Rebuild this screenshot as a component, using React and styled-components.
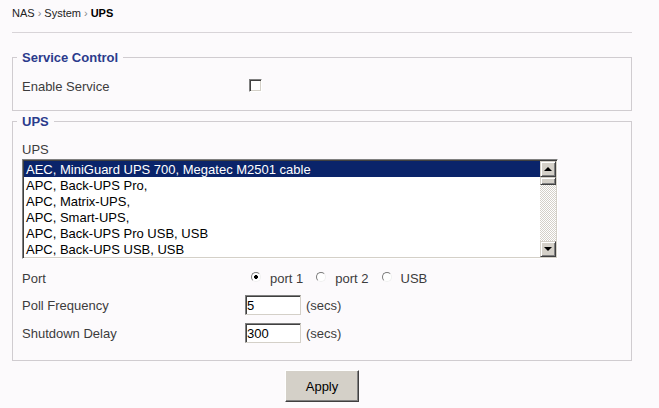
import React, { useState } from 'react';
import styled, { createGlobalStyle } from 'styled-components';

const GlobalStyle = createGlobalStyle`
  body {
    margin: 0;
    background: #fcfafc;
    font-family: "Liberation Sans", Arial, sans-serif;
    color: #3c3c3c;
  }
`;

const upsModels = [
  'AEC, MiniGuard UPS 700, Megatec M2501 cable',
  'APC, Back-UPS Pro,',
  'APC, Matrix-UPS,',
  'APC, Smart-UPS,',
  'APC, Back-UPS Pro USB, USB',
  'APC, Back-UPS USB, USB',
];

const Page = styled.div`
  width: 620px;
  margin-left: 12px;
`;

const Breadcrumb = styled.div`
  height: 26px;
  padding-top: 6px;
  line-height: 15px;
  font-size: 11px;
  color: #222;
  border-bottom: 1px solid #d8d4d8;
  b {
    color: #000;
  }
  span {
    color: #888;
    margin: 0 3px;
  }
`;

const Fieldset = styled.fieldset`
  margin: ${p => p.$top}px 0 0;
  padding: ${p => p.$pt}px 9px ${p => p.$pb}px;
  border: 1px solid #d0ccd0;
  min-width: 0;
`;

const Legend = styled.legend`
  margin-left: -5px;
  padding: 0 5px;
  font-size: 13px;
  font-weight: bold;
  line-height: 17px;
  color: #2b3a8c;
`;

const Row = styled.div`
  display: flex;
  align-items: center;
  height: ${p => p.$h || 28}px;
  margin-top: ${p => p.$mt || 0}px;
`;

const Label = styled.div`
  width: 223px;
  flex-shrink: 0;
  font-size: 13px;
  line-height: 16px;
  padding-top: 1px;
`;

const FieldTitle = styled.div`
  font-size: 13px;
  line-height: 16px;
  padding-top: 1px;
  height: 15px;
`;

const Checkbox = styled.input.attrs({ type: 'checkbox' })`
  appearance: none;
  width: 13px;
  height: 13px;
  margin: -1px 0 0 4px;
  background: #fff;
  border: 1px solid;
  border-color: #808080 #fff #fff #808080;
  box-shadow: inset 1px 1px #404040, inset -1px -1px #d4d0c8;
`;

const Radio = styled.input.attrs({ type: 'radio' })`
  appearance: none;
  width: 10px;
  height: 10px;
  margin: 0 9px 3px ${p => (p.$first ? 6 : 0)}px;
  border-radius: 50%;
  border: 1px solid;
  border-color: #7a7a7a #f0f0f0 #f0f0f0 #7a7a7a;
  background: #fff;
  &:checked {
    background: radial-gradient(circle, #000 0 1.6px, #fff 2.2px);
  }
`;

const RadioText = styled.span`
  font-size: 13px;
  margin-right: 13px;
  padding-top: 1px;
`;

const TextInput = styled.input`
  box-sizing: border-box;
  width: 56px;
  height: 20px;
  padding: 0 1px;
  font: 13px "Liberation Sans", Arial, sans-serif;
  color: #000;
  background: #fff;
  border: 1px solid;
  border-color: #808080 #d4d0c8 #d4d0c8 #808080;
  box-shadow: inset 1px 1px #404040;
  outline: none;
`;

const Unit = styled.span`
  margin-left: 5px;
  font-size: 13px;
  padding-top: 1px;
`;

const ListBox = styled.div`
  display: flex;
  box-sizing: border-box;
  width: 536px;
  height: 100px;
  margin-top: 2px;
  padding: 1px;
  background: #fff;
  border: 1px solid;
  border-color: #808080 #fff #fff #808080;
  box-shadow: inset 1px 1px #404040, inset -1px -1px #d4d0c8;
`;

const Options = styled.div`
  flex: 1;
  overflow: hidden;
`;

const Option = styled.div`
  box-sizing: border-box;
  height: 16px;
  padding: 1px 0 0 2px;
  font-size: 13px;
  line-height: 16px;
  white-space: nowrap;
  overflow: hidden;
  color: ${p => (p.$selected ? '#fff' : '#000')};
  background: ${p => (p.$selected ? '#0a246a' : 'transparent')};
  cursor: default;
`;

const Scrollbar = styled.div`
  display: flex;
  flex-direction: column;
  width: 16px;
`;

const ScrollButton = styled.div`
  box-sizing: border-box;
  display: flex;
  align-items: center;
  justify-content: center;
  width: 16px;
  height: ${p => p.$h || 16}px;
  background: #d4d0c8;
  border: 1px solid;
  border-color: #d4d0c8 #404040 #404040 #d4d0c8;
  box-shadow: inset 1px 1px #fff, inset -1px -1px #808080;
`;

const Arrow = styled.span`
  width: 0;
  height: 0;
  border-left: 4px solid transparent;
  border-right: 4px solid transparent;
  ${p => (p.$down ? 'border-top: 4px solid #000;' : 'border-bottom: 4px solid #000;')}
`;

const Track = styled.div`
  flex: 1;
  background: repeating-conic-gradient(#d4d0c8 0 25%, #fff 0 50%) 0 0 / 2px 2px;
`;

const ApplyButton = styled.button`
  display: block;
  width: 74px;
  height: 32px;
  margin: 9px auto 0;
  padding-top: 2px;
  font: 13px "Liberation Sans", Arial, sans-serif;
  color: #000;
  background: #d4d0c8;
  border: 1px solid;
  border-color: #fff #404040 #404040 #fff;
  box-shadow: inset -1px -1px #808080;
`;

const App = () => {
  const [enabled, setEnabled] = useState(false);
  const [selected, setSelected] = useState(0);
  const [port, setPort] = useState('port1');
  const [poll, setPoll] = useState('5');
  const [delay, setDelay] = useState('300');

  return (
    <Page>
      <GlobalStyle />
      <Breadcrumb>
        NAS<span>›</span>System<span>›</span><b>UPS</b>
      </Breadcrumb>

      <Fieldset $top={16} $pt={6} $pb={10}>
        <Legend>Service Control</Legend>
        <Row>
          <Label>Enable Service</Label>
          <Checkbox checked={enabled} onChange={e => setEnabled(e.target.checked)} />
        </Row>
      </Fieldset>

      <Fieldset $top={2} $pt={11} $pb={13}>
        <Legend>UPS</Legend>
        <FieldTitle>UPS</FieldTitle>
        <ListBox>
          <Options>
            {upsModels.map((model, i) => (
              <Option key={model} $selected={i === selected} onClick={() => setSelected(i)}>
                {model}
              </Option>
            ))}
          </Options>
          <Scrollbar>
            <ScrollButton>
              <Arrow />
            </ScrollButton>
            <ScrollButton $h={8} />
            <Track />
            <ScrollButton>
              <Arrow $down />
            </ScrollButton>
          </Scrollbar>
        </ListBox>

        <Row $h={26} $mt={6}>
          <Label>Port</Label>
          <Radio $first name="port" checked={port === 'port1'} onChange={() => setPort('port1')} />
          <RadioText>port 1</RadioText>
          <Radio name="port" checked={port === 'port2'} onChange={() => setPort('port2')} />
          <RadioText>port 2</RadioText>
          <Radio name="port" checked={port === 'usb'} onChange={() => setPort('usb')} />
          <RadioText>USB</RadioText>
        </Row>
        <Row>
          <Label>Poll Frequency</Label>
          <TextInput value={poll} onChange={e => setPoll(e.target.value)} />
          <Unit>(secs)</Unit>
        </Row>
        <Row>
          <Label>Shutdown Delay</Label>
          <TextInput value={delay} onChange={e => setDelay(e.target.value)} />
          <Unit>(secs)</Unit>
        </Row>
      </Fieldset>

      <ApplyButton>Apply</ApplyButton>
    </Page>
  );
};

export default App;
